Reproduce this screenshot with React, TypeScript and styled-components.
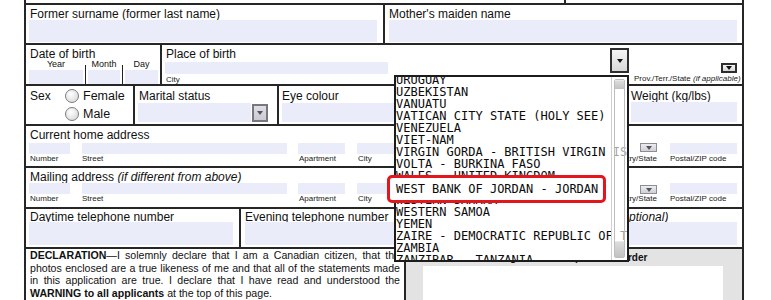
import React from "react";
import styled, { createGlobalStyle } from "styled-components";

const LINE = "#262626";
const FILL = "#eaedf9";

const Global = createGlobalStyle`
  html, body { margin: 0; padding: 0; background: #fff; }
  body { font-family: "Liberation Sans", Arial, Helvetica, sans-serif; color: #111; }
  * { box-sizing: border-box; }
`;

const Page = styled.div`
  position: relative;
  width: 771px;
  height: 300px;
  overflow: hidden;
  background: #fff;
`;

const Form = styled.div`
  margin-left: 24px;
  width: 720px;
  border-left: 2px solid ${LINE};
  border-right: 2px solid ${LINE};
  display: flex;
  flex-direction: column;
`;

const Row = styled.div<{ $h: number }>`
  display: flex;
  flex-shrink: 0;
  height: ${(p) => p.$h}px;
  border-bottom: 2px solid ${LINE};
`;

const Cell = styled.div<{ $w?: number; $bl?: boolean; $pt?: number; $row?: boolean; $bg?: string }>`
  ${(p) => (p.$w ? `width: ${p.$w}px; flex-shrink: 0;` : `flex: 1; min-width: 0;`)}
  ${(p) => (p.$bl ? `border-left: 2px solid ${LINE};` : "")}
  padding-top: ${(p) => p.$pt ?? 3}px;
  display: flex;
  flex-direction: ${(p) => (p.$row ? "row" : "column")};
  background: ${(p) => p.$bg ?? "transparent"};
`;

const Label = styled.div<{ $ml?: number }>`
  font-size: 12px;
  line-height: 12px;
  height: 12px;
  margin-left: ${(p) => p.$ml ?? 4}px;
  white-space: nowrap;
  color: #111;
  i { font-style: italic; }
`;

const Fill = styled.div<{ $h: number; $w?: number; $ml?: number; $mr?: number; $mt?: number }>`
  height: ${(p) => p.$h}px;
  ${(p) => (p.$w ? `width: ${p.$w}px; flex-shrink: 0;` : "")}
  margin: ${(p) => p.$mt ?? 0}px ${(p) => p.$mr ?? 0}px 0 ${(p) => p.$ml ?? 0}px;
  background: ${FILL};
`;

const Small = styled.div<{ $ml?: number; $mt?: number; $size?: number; $align?: string }>`
  font-size: ${(p) => p.$size ?? 8}px;
  line-height: 9px;
  height: 9px;
  margin-left: ${(p) => p.$ml ?? 0}px;
  margin-top: ${(p) => p.$mt ?? 0}px;
  white-space: nowrap;
  color: #1a1a1a;
  text-align: ${(p) => p.$align ?? "left"};
  i { font-style: italic; }
`;

/* ---- buttons ---- */
const Caret = styled.span<{ $c?: string }>`
  width: 0;
  height: 0;
  border-left: 3.5px solid transparent;
  border-right: 3.5px solid transparent;
  border-top: 4px solid ${(p) => p.$c ?? "#111"};
`;

const DropBtn = styled.div<{ $w: number; $h: number; $tone: "dark" | "grey" | "light"; $mt?: number; $ml?: number; $mr?: number; $mb?: number; $self?: string }>`
  width: ${(p) => p.$w}px;
  height: ${(p) => p.$h}px;
  flex-shrink: 0;
  align-self: ${(p) => p.$self ?? "auto"};
  margin: ${(p) => p.$mt ?? 0}px ${(p) => p.$mr ?? 0}px ${(p) => p.$mb ?? 0}px ${(p) => p.$ml ?? 0}px;
  display: flex;
  align-items: center;
  justify-content: center;
  border: ${(p) =>
    p.$tone === "dark" ? "2px solid #2e2e2e" : p.$tone === "grey" ? "2px solid #77777d" : "1px solid #8d8d94"};
  background: ${(p) =>
    p.$tone === "dark"
      ? "linear-gradient(#f5f5f5, #d8d8d8)"
      : p.$tone === "grey"
      ? "linear-gradient(#dedee6, #cacad4)"
      : "linear-gradient(#ececf2, #cfd0d8)"};
`;

/* ---- date ---- */
const DateFields = styled.div`
  display: flex;
  margin-top: 5px;
  height: 19px;
`;

const DateCol = styled.div<{ $w?: number; $tick?: boolean; $pl?: number }>`
  ${(p) => (p.$w ? `width: ${p.$w}px; flex-shrink: 0;` : "flex: 1;")}
  ${(p) => (p.$tick ? "border-left: 1px solid #222;" : "")}
  display: flex;
  flex-direction: column;
  padding: 0 2px 0 ${(p) => p.$pl ?? 2}px;
`;

const DateSub = styled.div`
  font-size: 9px;
  line-height: 9px;
  height: 9px;
  margin-top: -5px;
  text-align: center;
  white-space: nowrap;
`;

/* ---- place of birth ---- */
const PlaceMain = styled.div`
  width: 467px;
  flex-shrink: 0;
  padding-left: 4px;
  display: flex;
`;

const PlaceLeft = styled.div`
  flex: 1;
  display: flex;
  flex-direction: column;
`;

const ProvBox = styled.div`
  flex: 1;
  display: flex;
  flex-direction: column;
  align-items: stretch;
`;

/* ---- sex ---- */
const SexLabel = styled(Label)`
  width: 35px;
  flex-shrink: 0;
`;

const RadioGroup = styled.div`
  display: flex;
  flex-direction: column;
  margin-top: -1px;
`;

const RadioRow = styled.div`
  display: flex;
  gap: 4px;
  height: 18px;
  align-items: flex-start;
`;

const Radio = styled.span`
  width: 14px;
  height: 14px;
  border-radius: 50%;
  border: 1px solid #7c7c7c;
  background: radial-gradient(circle at 40% 35%, #ffffff, #d2d2d6);
  flex-shrink: 0;
`;

const RadioText = styled.span`
  font-size: 12.5px;
  line-height: 15px;
`;

const InlineRow = styled.div<{ $mt?: number }>`
  display: flex;
  margin-top: ${(p) => p.$mt ?? 0}px;
`;

/* ---- address ---- */
const AddrFields = styled.div<{ $mt: number }>`
  display: flex;
  padding-left: 3px;
  margin-top: ${(p) => p.$mt}px;
`;

const Field = styled.div<{ $w: number; $ml?: number; $end?: boolean }>`
  width: ${(p) => p.$w}px;
  flex-shrink: 0;
  margin-left: ${(p) => p.$ml ?? 0}px;
  display: flex;
  flex-direction: column;
  align-items: ${(p) => (p.$end ? "flex-end" : "stretch")};
`;

/* ---- declaration / signature ---- */
const DeclText = styled.div`
  padding: 0 4px;
  font-size: 10.6px;
  line-height: 12.7px;
  color: #111;
  b { font-weight: bold; }
`;

const DeclLine = styled.div<{ $last?: boolean }>`
  text-align: ${(p) => (p.$last ? "left" : "justify")};
  text-align-last: ${(p) => (p.$last ? "left" : "justify")};
  height: 12.7px;
`;

const SigLabel = styled.div`
  margin-top: 3px;
  font-size: 10px;
  line-height: 11px;
  font-weight: bold;
  text-align: center;
  white-space: nowrap;
`;

const SigBox = styled.div`
  margin: 3px 19px 0 17px;
  height: 40px;
  background: #fff;
`;

/* ---- dropdown list overlay ---- */
const ListBox = styled.div`
  position: absolute;
  left: 394px;
  top: 75px;
  width: 235px;
  height: 187px;
  border: 2px solid #1c1c1c;
  background: #fff;
`;

const ItemsClip = styled.div`
  height: 100%;
  overflow: hidden;
`;

const ItemList = styled.div`
  margin-top: -3px;
`;

const Item = styled.div`
  font-family: "DejaVu Sans Mono", "Liberation Mono", monospace;
  font-size: 12px;
  line-height: 12px;
  height: 12px;
  white-space: nowrap;
  color: #0a0a0a;
`;

const Scrollbar = styled.div`
  position: absolute;
  top: 0;
  right: 0;
  bottom: 0;
  width: 16px;
  background: rgba(255, 255, 255, 0.62);
  border-left: 1px solid #d0d0d0;
  padding: 2px 2px;
  display: flex;
`;

const Thumb = styled.div`
  flex: 1;
  border: 1px solid #bdbdbd;
  border-radius: 2px;
  display: flex;
  flex-direction: column;
  justify-content: space-between;
`;

const ThumbCap = styled.div<{ $h: number }>`
  height: ${(p) => p.$h}px;
  background: linear-gradient(#dcdcdc, #c2c2c2);
  border-top: 1px solid #e8e8e8;
`;

const Highlight = styled.div`
  position: absolute;
  left: -9px;
  top: 98px;
  width: 219px;
  height: 28px;
  border: 3px solid #e3161d;
  border-radius: 5px;
  background: #fff;
  padding-left: 6px;
  font-family: "DejaVu Sans Mono", "Liberation Mono", monospace;
  font-size: 12px;
  line-height: 22px;
  white-space: nowrap;
  color: #0a0a0a;
`;

const countries = [
  "URUGUAY",
  "UZBEKISTAN",
  "VANUATU",
  "VATICAN CITY STATE (HOLY SEE)",
  "VENEZUELA",
  "VIET-NAM",
  "VIRGIN GORDA - BRITISH VIRGIN ISLANDS",
  "VOLTA - BURKINA FASO",
  "WALES - UNITED KINGDOM",
  "WEST BANK OF JORDAN - JORDAN",
  "WESTERN SAHARA",
  "WESTERN SAMOA",
  "YEMEN",
  "ZAIRE - DEMOCRATIC REPUBLIC OF THE CONGO",
  "ZAMBIA",
  "ZANZIBAR - TANZANIA",
];

function AddressFields({ mt, btnTop }: { mt: number; btnTop: number }) {
  return (
    <AddrFields $mt={mt}>
      <Field $w={41}>
        <Fill $h={11} />
        <Small $ml={1}>Number</Small>
      </Field>
      <Field $w={205} $ml={12}>
        <Fill $h={11} />
        <Small>Street</Small>
      </Field>
      <Field $w={47} $ml={11}>
        <Fill $h={11} />
        <Small $ml={1}>Apartment</Small>
      </Field>
      <Field $w={240} $ml={12}>
        <Fill $h={11} />
        <Small $ml={1}>City</Small>
      </Field>
      <Field $w={57} $ml={3} $end>
        <DropBtn $w={17} $h={9} $tone="light" $mt={btnTop} $mb={2 - btnTop}>
          <Caret $c="#555" />
        </DropBtn>
        <Small $align="right">Country/State</Small>
      </Field>
      <Field $w={67} $ml={13}>
        <Fill $h={11} />
        <Small>Postal/ZIP code</Small>
      </Field>
    </AddrFields>
  );
}

export default function App() {
  return (
    <Page>
      <Global />
      <Form>
        <Row $h={5}>
          <Cell $w={538} />
          <Cell $bl />
        </Row>

        <Row $h={40}>
          <Cell $w={357}>
            <Label>Former surname (former last name)</Label>
            <Fill $h={22} $ml={3} $mr={6} />
          </Cell>
          <Cell $bl>
            <Label>Mother's maiden name</Label>
            <Fill $h={22} $ml={4} $mr={5} />
          </Cell>
        </Row>

        <Row $h={41}>
          <Cell $w={134}>
            <Label>Date of birth</Label>
            <DateFields>
              <DateCol $w={59} $pl={3}>
                <DateSub>Year</DateSub>
                <Fill $h={14} $mt={1} />
              </DateCol>
              <DateCol $w={37} $tick>
                <DateSub>Month</DateSub>
                <Fill $h={14} $mt={1} />
              </DateCol>
              <DateCol $tick>
                <DateSub>Day</DateSub>
                <Fill $h={14} $mt={1} />
              </DateCol>
            </DateFields>
          </Cell>
          <Cell $bl $row>
            <PlaceMain>
              <PlaceLeft>
                <Label $ml={0}>Place of birth</Label>
                <Fill $h={12} $w={223} $ml={-1} $mt={2} />
                <Small $mt={1}>City</Small>
              </PlaceLeft>
              <DropBtn $w={19} $h={25} $tone="dark">
                <Caret />
              </DropBtn>
            </PlaceMain>
            <ProvBox>
              <DropBtn $w={16} $h={10} $tone="dark" $mt={15} $mr={5} $self="flex-end">
                <Caret />
              </DropBtn>
              <Small $ml={5} $mt={1} $size={8}>
                Prov./Terr./State <i>(if applicable)</i>
              </Small>
            </ProvBox>
          </Cell>
        </Row>

        <Row $h={40}>
          <Cell $w={107} $pt={4} $row>
            <SexLabel>Sex</SexLabel>
            <RadioGroup>
              <RadioRow>
                <Radio />
                <RadioText>Female</RadioText>
              </RadioRow>
              <RadioRow>
                <Radio />
                <RadioText>Male</RadioText>
              </RadioRow>
            </RadioGroup>
          </Cell>
          <Cell $w={144} $bl $pt={4}>
            <Label>Marital status</Label>
            <InlineRow $mt={1}>
              <Fill $h={19} $w={113} $ml={3} />
              <DropBtn $w={16} $h={18} $tone="grey" $ml={1} $mt={1}>
                <Caret $c="#555" />
              </DropBtn>
            </InlineRow>
          </Cell>
          <Cell $w={228} $bl $pt={4}>
            <Label $ml={3}>Eye colour</Label>
            <Fill $h={19} $ml={3} $mr={4} $mt={1} />
          </Cell>
          <Cell $w={122} $bl $pt={4}>
            <Label>Height (cm/in)</Label>
            <Fill $h={19} $ml={3} $mr={4} $mt={1} />
          </Cell>
          <Cell $bl $pt={4}>
            <Label $ml={2}>Weight (kg/lbs)</Label>
            <Fill $h={20} $ml={2} $mr={5} />
          </Cell>
        </Row>

        <Row $h={42}>
          <Cell>
            <Label>Current home address</Label>
            <AddressFields mt={2} btnTop={0} />
          </Cell>
        </Row>

        <Row $h={41}>
          <Cell>
            <Label>
              Mailing address <i>(if different from above)</i>
            </Label>
            <AddressFields mt={0} btnTop={2} />
          </Cell>
        </Row>

        <Row $h={40}>
          <Cell $w={213} $pt={2}>
            <Label>Daytime telephone number</Label>
            <Fill $h={23} $ml={3} $mr={6} $mt={-1} />
          </Cell>
          <Cell $w={290} $bl $pt={2}>
            <Label>Evening telephone number</Label>
            <Fill $h={23} $ml={4} $mr={5} $mt={-1} />
          </Cell>
          <Cell $bl $pt={2}>
            <Label>
              E-mail address <i>(optional)</i>
            </Label>
            <Fill $h={23} $ml={3} $mr={5} $mt={-1} />
          </Cell>
        </Row>

        <Row $h={70}>
          <Cell $w={378} $pt={0}>
            <DeclText>
              <DeclLine>
                <b>DECLARATION</b>—I solemnly declare that I am a Canadian citizen, that the
              </DeclLine>
              <DeclLine>photos enclosed are a true likeness of me and that all of the statements made</DeclLine>
              <DeclLine>in this application are true. I declare that I have read and understood the</DeclLine>
              <DeclLine $last>
                <b>WARNING to all applicants</b> at the top of this page.
              </DeclLine>
            </DeclText>
          </Cell>
          <Cell $bl $pt={0} $bg="#e3e3e3">
            <SigLabel>Signature—Keep within border</SigLabel>
            <SigBox />
          </Cell>
        </Row>
      </Form>

      <ListBox>
        <ItemsClip>
          <ItemList>
            {countries.map((c) => (
              <Item key={c}>{c}</Item>
            ))}
          </ItemList>
        </ItemsClip>
        <Scrollbar>
          <Thumb>
            <ThumbCap $h={9} />
            <ThumbCap $h={16} />
          </Thumb>
        </Scrollbar>
        <Highlight>WEST BANK OF JORDAN - JORDAN</Highlight>
      </ListBox>
    </Page>
  );
}
